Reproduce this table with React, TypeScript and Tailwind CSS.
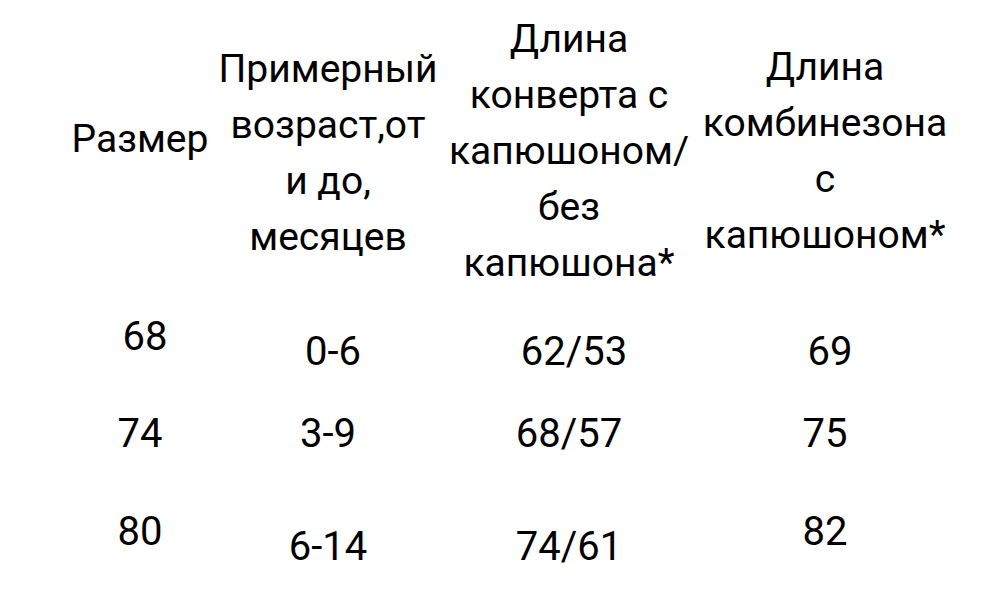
/**
 * SizeChart — таблица размеров (конверт / комбинезон)
 */

const COLS = 'grid grid-cols-[156px_220px_262px_250px]'

type Cell = { text: string; low?: boolean }

const ROWS: { cells: Cell[]; className: string }[] = [
  {
    // первая строка в оригинале чуть сдвинута вправо
    className: 'h-[97px] ml-[5px]',
    cells: [{ text: '68' }, { text: '0-6', low: true }, { text: '62/53', low: true }, { text: '69', low: true }],
  },
  {
    className: 'h-[98px]',
    cells: [{ text: '74' }, { text: '3-9' }, { text: '68/57' }, { text: '75' }],
  },
  {
    className: 'h-[80px]',
    cells: [{ text: '80' }, { text: '6-14', low: true }, { text: '74/61', low: true }, { text: '82' }],
  },
]

function HeaderCell({ lines, className = '' }: { lines: string[]; className?: string }) {
  return (
    <div className={`flex flex-col items-center ${className}`}>
      {lines.map((l) => (
        <span key={l} className="whitespace-nowrap">
          {l}
        </span>
      ))}
    </div>
  )
}

export default function App() {
  return (
    <div className="w-[1004px] h-[600px] overflow-hidden bg-white text-black font-['Roboto',sans-serif] text-[39px] leading-[56px] pl-[62px] pt-[11px]">
      {/* шапка */}
      <div className={`${COLS} items-center h-[280px]`}>
        <HeaderCell lines={['Размер']} className="mb-[24px]" />
        <HeaderCell lines={['Примерный', 'возраст,от', 'и до,', 'месяцев']} className="mt-[4px]" />
        <HeaderCell lines={['Длина', 'конверта с', 'капюшоном/', 'без', 'капюшона*']} />
        <HeaderCell lines={['Длина', 'комбинезона', 'с', 'капюшоном*']} />
      </div>

      {/* данные */}
      <div className="mt-[18px] text-[40px]">
        {ROWS.map((row, i) => (
          <div key={i} className={`${COLS} items-start ${row.className}`}>
            {row.cells.map((c, j) => (
              <div key={j} className={`flex justify-center ${c.low ? 'pt-[15px]' : ''}`}>
                {c.text}
              </div>
            ))}
          </div>
        ))}
      </div>
    </div>
  )
}
